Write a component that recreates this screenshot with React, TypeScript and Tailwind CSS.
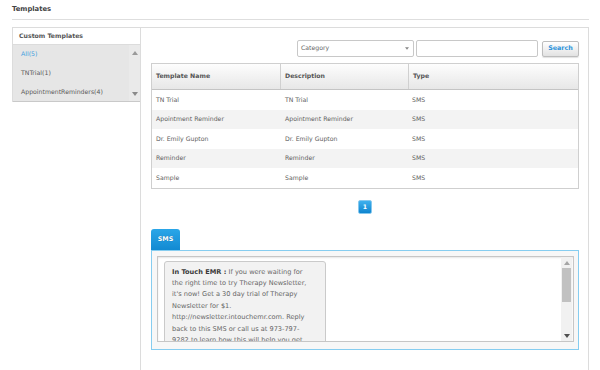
import React from "react"

// Listado de plantillas (datos de ejemplo)
const templates = [
	{ name: "TN Trial", description: "TN Trial", type: "SMS" },
	{ name: "Apointment Reminder", description: "Apointment Reminder", type: "SMS" },
	{ name: "Dr. Emily Gupton", description: "Dr. Emily Gupton", type: "SMS" },
	{ name: "Reminder", description: "Reminder", type: "SMS" },
	{ name: "Sample", description: "Sample", type: "SMS" },
]

const categories = [
	{ id: "all", label: "All(5)", active: true },
	{ id: "tn", label: "TNTrial(1)" },
	{ id: "appt", label: "AppointmentReminders(4)" },
]

// Mensaje de vista previa, con los saltos de línea del original
const messageLines = [
	"the right time to try Therapy Newsletter,",
	"it's now! Get a 30 day trial of Therapy",
	"Newsletter for $1.",
	"http://newsletter.intouchemr.com. Reply",
	"back to this SMS or call us at 973-797-",
	"9282 to learn how this will help you get",
]

function Tri({ dir, className }: { dir: "up" | "down"; className?: string }) {
	return (
		<svg width="6" height="4" viewBox="0 0 6 4" className={className}>
			{dir === "up" ? (
				<path d="M0 4 L3 0 L6 4Z" fill="currentColor" />
			) : (
				<path d="M0 0 L6 0 L3 4Z" fill="currentColor" />
			)}
		</svg>
	)
}

function Sidebar() {
	return (
		<aside className="w-[128px] self-start border-l border-t border-[#dcdcdc]">
			<div className="h-[17px] border-b border-[#dcdcdc] bg-white flex items-center pl-[6px]">
				<span className="text-[6.2px] font-bold text-[#555] leading-none">Custom Templates</span>
			</div>
			<div className="h-[57px] border-b border-[#c9c9c9] bg-[#e6e6e6] flex">
				<ul className="flex-1">
					{categories.map((c) => (
						<li
							key={c.id}
							className={`h-[19px] flex items-center pl-[8px] text-[6.2px] leading-none ${
								c.active ? "text-[#3d9ee0]" : "text-[#5a5a5a]"
							}`}
						>
							{c.label}
						</li>
					))}
				</ul>
				<div className="w-[11px] bg-[#eaeaea] flex flex-col items-center justify-between pt-[6px] pb-[5px]">
					<Tri dir="up" className="text-[#9a9a9a]" />
					<Tri dir="down" className="text-[#8a8a8a]" />
				</div>
			</div>
		</aside>
	)
}

function SearchBar() {
	return (
		<div className="h-[17px] flex justify-end gap-[2px]">
			<div className="w-[117px] h-full border border-[#c8c8c8] rounded-[2px] bg-white flex items-center justify-between pl-[3px] pr-[4px]">
				<span className="text-[6.2px] text-[#666] leading-none">Category</span>
				<Tri dir="down" className="text-[#888] w-[4px] h-[3px]" />
			</div>
			<div className="w-[122px] h-full border border-[#c8c8c8] rounded-[2px] bg-white" />
			<button className="ml-[2px] w-[37px] h-[16px] mt-[0.5px] border border-[#bdbdbd] rounded-[2px] bg-linear-to-b from-white to-[#e2e2e2] shadow-[0_1px_1px_rgba(0,0,0,0.12)] text-[6.4px] font-bold text-[#2b94dc] leading-none">
				Search
			</button>
		</div>
	)
}

function TemplateTable() {
	return (
		<div className="mt-[6px] border border-[#cfcfcf]">
			<div className="h-[26px] grid grid-cols-[129px_128px_1fr] border-b border-[#c4c4c4] bg-linear-to-b from-[#fdfdfd] to-[#e7e7e7]">
				{["Template Name", "Description", "Type"].map((h, i) => (
					<div
						key={h}
						className={`flex items-center pl-[4px] text-[6.2px] font-bold text-[#555] leading-none ${
							i < 2 ? "border-r border-[#d0d0d0]" : ""
						}`}
					>
						{h}
					</div>
				))}
			</div>
			{templates.map((t, i) => (
				<div
					key={t.name}
					className={`h-[19.5px] grid grid-cols-[129px_128px_1fr] text-[6.2px] text-[#5e5e5e] leading-none ${
						i % 2 === 1 ? "bg-[#f3f3f3]" : "bg-white"
					}`}
				>
					<div className="flex items-center pl-[4px]">{t.name}</div>
					<div className="flex items-center pl-[4px]">{t.description}</div>
					<div className="flex items-center pl-[3px]">{t.type}</div>
				</div>
			))}
		</div>
	)
}

function SmsPreview() {
	return (
		<div className="mt-[15px]">
			<div className="w-[29px] h-[21px] rounded-t-[3px] bg-linear-to-b from-[#2aa6e8] to-[#128ad2] flex items-center justify-center">
				<span className="text-[6.4px] font-bold text-white leading-none [text-shadow:0_0_1px_rgba(0,0,0,0.3)]">SMS</span>
			</div>
			<div className="h-[100px] border border-[#86cdf0] bg-[#f7f7f7] pt-[5px] pl-[5px] pr-[4px]">
				<div className="h-[86px] border border-[#c6c6c6] bg-white flex shadow-[inset_0_1px_2px_rgba(0,0,0,0.1)]">
					<div className="flex-1 overflow-hidden pl-[6px] pt-[4px]">
						<div className="w-[162px] border border-[#cacaca] rounded-[3px] bg-[#f2f2f2] px-[7px] pt-[4.5px] pb-[6px] text-[6.6px] leading-[11.4px] text-[#666]">
							<div className="whitespace-nowrap">
								<span className="font-bold text-[#3a3a3a]">In Touch EMR : </span>If you were waiting for
							</div>
							{messageLines.map((l) => (
								<div key={l} className="whitespace-nowrap">
									{l}
								</div>
							))}
						</div>
					</div>
					<div className="w-[11px] mr-[1px] bg-[#f1f1f1] flex flex-col items-center">
						<div className="h-[11px] flex items-center justify-center">
							<Tri dir="up" className="text-[#a5a5a5]" />
						</div>
						<div className="w-[9px] h-[34px] bg-[#c1c1c1]" />
						<div className="flex-1" />
						<div className="h-[11px] flex items-center justify-center">
							<Tri dir="down" className="text-[#505050]" />
						</div>
					</div>
				</div>
			</div>
		</div>
	)
}

export default function App() {
	return (
		<div className="w-[600px] h-[370px] overflow-hidden bg-white pl-[12px] pr-[11px] font-['DejaVu_Sans',sans-serif]">
			<div className="h-[20px] border-b border-[#dedede] flex items-center">
				<h1 className="text-[6.8px] font-bold text-[#444] leading-none">Templates</h1>
			</div>

			<div className="mt-[7px] flex h-[343px]">
				<Sidebar />

				<main className="flex-1 border-l border-t border-r border-[#dcdcdc] pl-[10px] pr-[9px] pt-[12px]">
					<SearchBar />
					<TemplateTable />

					{/* Paginación */}
					<div className="mt-[11.5px] flex justify-center">
						<div className="w-[14px] h-[14px] rounded-[2px] border border-[#86c8ee] bg-linear-to-b from-[#3db0ee] to-[#0d85cf] flex items-center justify-center">
							<span className="text-[6.2px] font-bold text-white leading-none">1</span>
						</div>
					</div>

					<SmsPreview />
				</main>
			</div>
		</div>
	)
}
